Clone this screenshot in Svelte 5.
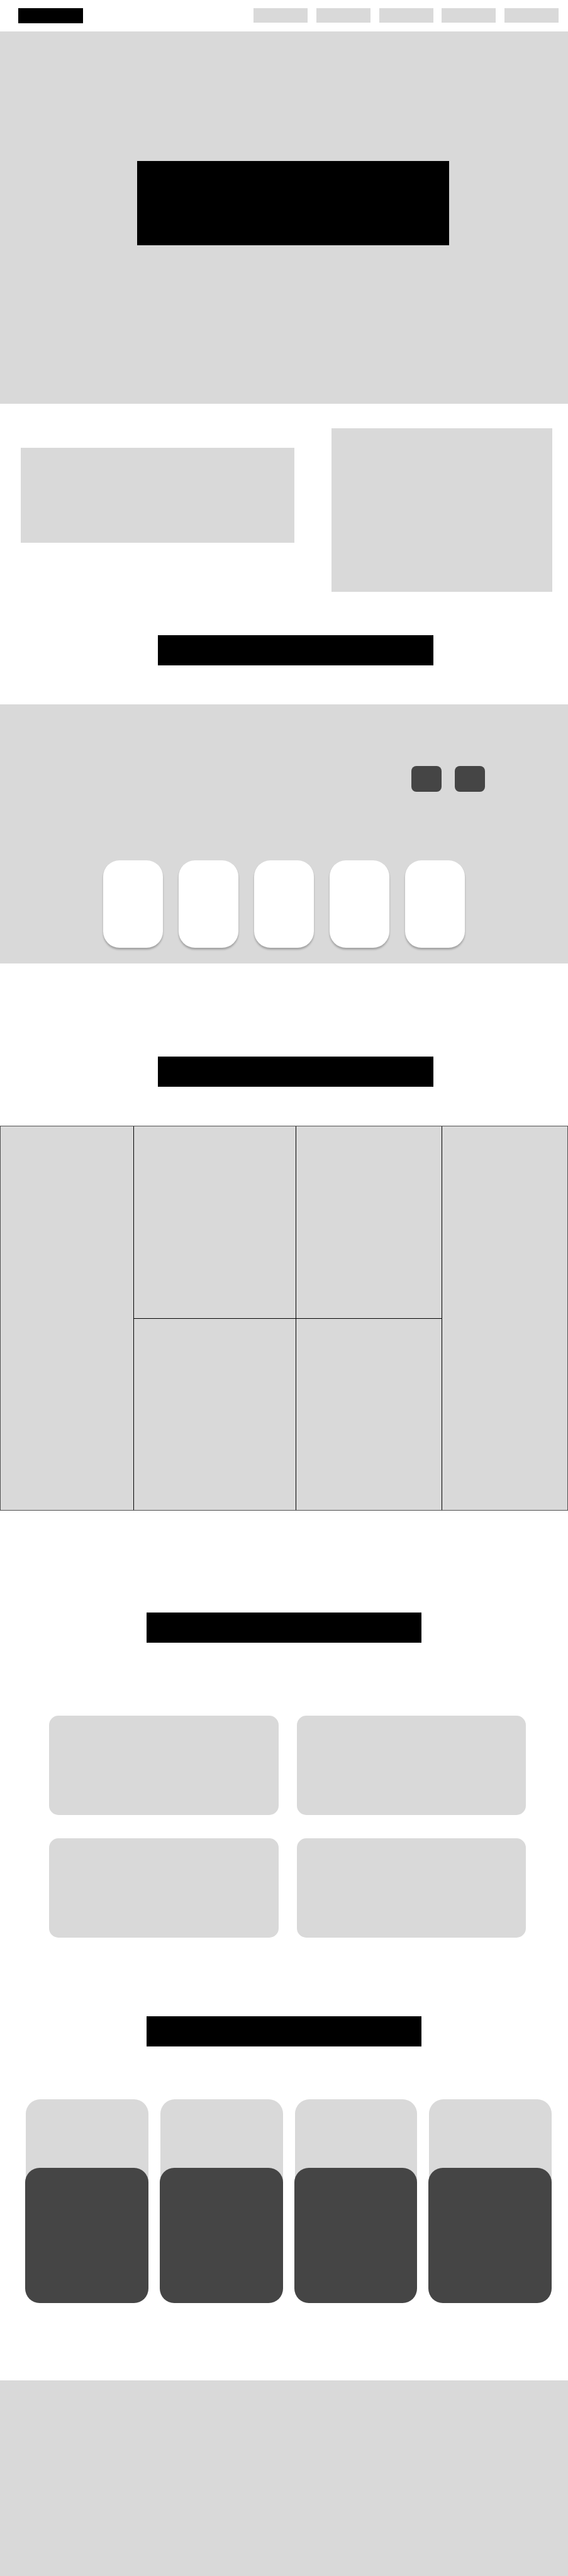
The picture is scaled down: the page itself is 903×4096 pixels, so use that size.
<script>
  const links = ['Home', 'About', 'Products', 'Gallery', 'Contact'];
  const slides = [1, 2, 3, 4, 5];
  const tiles = ['tall', '', '', 'tall', '', ''];
  const features = [1, 2, 3, 4];
  const profiles = [1, 2, 3, 4];
</script>

<header class="bar">
  <a class="logo" href="#top" aria-label="Logo"></a>
  <nav class="links">
    {#each links as link}
      <a href="#{link.toLowerCase()}" aria-label={link}></a>
    {/each}
  </nav>
</header>

<main>
  <section class="hero" id="top">
    <div class="headline"></div>
  </section>

  <section class="about">
    <div class="copy"></div>
    <div class="picture"></div>
  </section>

  <div class="title shifted"></div>

  <section class="carousel">
    <div class="controls">
      <button type="button" aria-label="Previous"></button>
      <button type="button" aria-label="Next"></button>
    </div>
    <div class="slides">
      {#each slides as slide (slide)}
        <article></article>
      {/each}
    </div>
  </section>

  <div class="title shifted second"></div>

  <section class="mosaic">
    {#each tiles as tile}
      <div class={tile}></div>
    {/each}
  </section>

  <div class="title third"></div>

  <section class="features">
    {#each features as feature (feature)}
      <article></article>
    {/each}
  </section>

  <div class="title fourth"></div>

  <section class="profiles">
    {#each profiles as profile (profile)}
      <article>
        <div class="photo"></div>
        <div class="details"></div>
      </article>
    {/each}
  </section>
</main>

<footer></footer>

<style>
  :global(body) {
    background: #fff;
    font-family: Inter, sans-serif;
  }

  header, main, section, div, article, nav, a, button, footer {
    box-sizing: border-box;
  }

  .bar {
    display: flex;
    justify-content: space-between;
    align-items: flex-start;
    height: 50px;
    padding: 13px 15px 0 29px;
  }

  .logo {
    width: 103px;
    height: 24px;
    background: #000;
  }

  .links {
    display: flex;
    justify-content: space-between;
    width: 485px;
  }

  .links a {
    width: 86px;
    height: 23px;
    background: #d9d9d9;
  }

  .hero {
    height: 592px;
    padding: 206px 189px 0 218px;
    background: #d9d9d9;
  }

  .headline {
    height: 134px;
    background: #000;
  }

  .about {
    display: grid;
    grid-template-columns: 435fr 351fr;
    column-gap: 59px;
    padding: 39px 25px 69px 33px;
  }

  .copy {
    height: 151px;
    margin-top: 31px;
    background: #d9d9d9;
  }

  .picture {
    height: 260px;
    background: #d9d9d9;
  }

  .title {
    height: 48px;
    margin: 0 233px;
    background: #000;
  }

  .title.shifted {
    margin: 0 214px 62px 251px;
  }

  .carousel {
    height: 412px;
    padding: 98px 132px 0 164px;
    background: #d9d9d9;
  }

  .controls {
    display: flex;
    justify-content: flex-end;
    gap: 21px;
    margin-bottom: 109px;
  }

  .controls button {
    width: 48px;
    height: 41px;
    padding: 0;
    border: 0;
    border-radius: 8px;
    background: #454545;
  }

  .slides {
    display: grid;
    grid-template-columns: repeat(5, 1fr);
    gap: 25px;
    margin-right: 32px;
  }

  .slides article {
    height: 139px;
    border-radius: 26px;
    background: #fff;
    box-shadow: 0 3px 3px rgba(0, 0, 0, 0.25);
  }

  .title.second {
    margin-top: 148px;
  }

  .mosaic {
    display: grid;
    grid-template-columns: 211fr 257fr 231fr 199fr;
    grid-template-rows: 305px 304px;
    gap: 1px;
    border: 1px solid #505050;
    background: #000;
  }

  .mosaic div {
    background: #d9d9d9;
  }

  .mosaic .tall {
    grid-row: span 2;
  }

  .title.third {
    margin-top: 162px;
  }

  .features {
    display: grid;
    grid-template-columns: 1fr 1fr;
    gap: 37px 29px;
    padding: 116px 67px 125px 78px;
  }

  .features article {
    height: 158px;
    border-radius: 15px;
    background: #d9d9d9;
  }

  .profiles {
    display: grid;
    grid-template-columns: repeat(4, 1fr);
    gap: 18px;
    padding: 84px 26px 123px 40px;
  }

  .photo {
    height: 140px;
    margin-left: 1px;
    border-radius: 23px 23px 0 0;
    background: #d9d9d9;
  }

  .details {
    height: 215px;
    margin-top: -31px;
    border-radius: 23px;
    background: #454545;
  }

  footer {
    height: 311px;
    background: #d9d9d9;
  }
</style>
